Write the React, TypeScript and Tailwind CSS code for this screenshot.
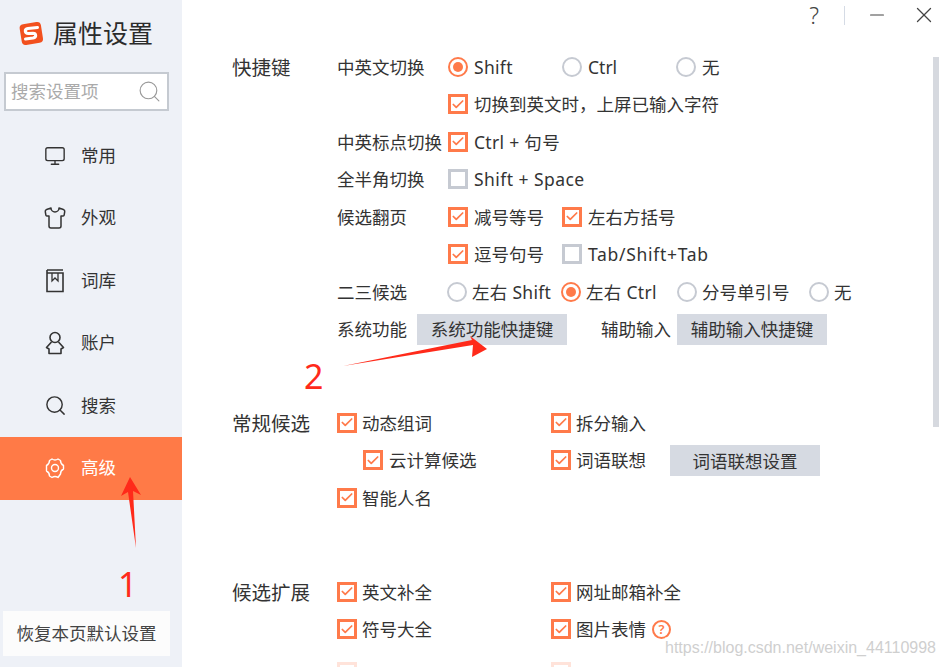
import { Monitor, Shirt, Search, Check, X, Minus } from 'lucide-react'

const FONT = '[font-family:"Noto_Sans","Noto_Sans_CJK_SC",sans-serif]'

function Box({ on = true }: { on?: boolean }) {
  return (
    <span
      className={`flex h-5 w-5 shrink-0 items-center justify-center border-[3px] bg-white ${
        on ? 'border-[#ff7a4a]' : 'border-[#c6cad2]'
      }`}
    >
      {on && <Check size={15} strokeWidth={3} className="text-[#ff7a4a]" />}
    </span>
  )
}

function Radio({ on = false }: { on?: boolean }) {
  return (
    <span
      className={`flex h-5 w-5 shrink-0 items-center justify-center rounded-full border-[2.5px] bg-white ${
        on ? 'border-[#ff7a4a]' : 'border-[#c6cad2]'
      }`}
    >
      {on && <span className="h-2.5 w-2.5 rounded-full bg-[#ff7a4a]" />}
    </span>
  )
}

function Opt({
  kind = 'box',
  on = true,
  text,
  width,
  gap = 'gap-[6px]',
  latin,
}: {
  kind?: 'box' | 'radio'
  on?: boolean
  text: string
  width?: string
  gap?: string
  latin?: string
}) {
  return (
    <div className={`flex items-center ${gap} ${width ?? ''}`}>
      {kind === 'box' ? <Box on={on} /> : <Radio on={on} />}
      <span className={`whitespace-nowrap ${latin ?? ''}`}>{text}</span>
    </div>
  )
}

function Row({ label, children }: { label?: string; children: React.ReactNode }) {
  return (
    <div className="flex h-[37.5px] items-center">
      <span className="w-[111px] shrink-0 whitespace-nowrap">{label}</span>
      {children}
    </div>
  )
}

function Btn({ text, width }: { text: string; width: string }) {
  return (
    <button className={`h-[31px] ${width} bg-[#d6dae2] text-[17.5px] text-[#333]`}>{text}</button>
  )
}

function BookIcon() {
  return (
    <svg width="18" height="24" viewBox="0 0 18 24" fill="none" stroke="#333" strokeWidth="1.6">
      <path d="M1 1h16M1 1v21.500h16V4H1" />
      <path d="M6 4v8l3-3 3 3V4" strokeWidth="1.300" />
    </svg>
  )
}

function UserIcon() {
  return (
    <svg width="20" height="24" viewBox="0 0 20 24" fill="none" stroke="#333" strokeWidth="1.6" strokeLinejoin="round">
      <circle cx="10" cy="6.500" r="5" />
      <path d="M6.500 11 1.500 16.500l2.500 1.500v4.500h12V18l2.500-1.500-5-5.500" />
    </svg>
  )
}

function GearIcon() {
  return (
    <svg width="22" height="24" viewBox="0 0 22 24" fill="none" stroke="#fff" strokeWidth="1.400" strokeLinejoin="round">
      <path d="M8 2.500q3 2 6 0l2.500 1.500q0 3.500 3 5v3.500q-3 1.500-3 5L14 21q-3-2-6 0l-2.500-1.500q0-3.500-3-5V9q3-1.500 3-5z" transform="translate(0 .500)" />
      <circle cx="11" cy="12" r="3.500" />
    </svg>
  )
}

function NavItem({
  icon,
  text,
  active,
}: {
  icon: React.ReactNode
  text: string
  active?: boolean
}) {
  return (
    <div
      className={`flex h-[62.5px] items-center ${
        active ? 'bg-[#ff7a47] text-white' : 'text-[#333]'
      }`}
    >
      <span className="flex w-[81px] justify-center pl-[29px]">{icon}</span>
      <span className="pb-[2px] text-[17.5px]">{text}</span>
    </div>
  )
}

function Logo() {
  return (
    <svg width="27" height="27" viewBox="0 0 27 27">
      <rect x="2.500" y="3" width="21.500" height="21" rx="4" fill="#f2501e" transform="rotate(-9 13 13)" />
      <path
        d="M19.500 7.500 10 8.500q-3 .5-2.700 2.700t3 2.300l4.700-.2q2.500 0 2.700 2t-2.700 2.700L7.500 19"
        fill="none"
        stroke="#fff"
        strokeWidth="3"
        strokeLinecap="round"
      />
    </svg>
  )
}

export default function App() {
  return (
    <div className={`relative flex h-[667px] w-[947px] overflow-hidden bg-white text-[17.5px] text-[#333] ${FONT}`}>
      {/* sidebar */}
      <aside className="flex w-[182px] shrink-0 flex-col bg-[#eef1f7]">
        <div className="flex h-[66px] items-center gap-[8px] pl-[18px]">
          <Logo />
          <span className="text-[25px] leading-none text-[#2b2b2b]">属性设置</span>
        </div>
        <div className="mt-[6px] ml-[4px] flex h-[39px] w-[165px] items-center justify-between border-[2px] border-[#c5cad1] bg-white pr-[5px] pl-[5px]">
          <span className="text-[17.5px] text-[#aaa]">搜索设置项</span>
          <Search size={25} strokeWidth={1.1} className="text-[#999]" />
        </div>
        <div className="mt-[13.5px] flex flex-col">
          <NavItem icon={<Monitor size={22} strokeWidth={1.5} />} text="常用" />
          <NavItem icon={<Shirt size={24} strokeWidth={1.5} />} text="外观" />
          <NavItem icon={<BookIcon />} text="词库" />
          <NavItem icon={<UserIcon />} text="账户" />
          <NavItem icon={<Search size={23} strokeWidth={1.5} />} text="搜索" />
          <NavItem icon={<GearIcon />} text="高级" active />
        </div>
        <button className="mt-auto mb-[11px] ml-[3px] h-[45px] w-[167px] bg-[#fcfcfc] text-[17.5px] whitespace-nowrap text-[#444]">
          恢复本页默认设置
        </button>
      </aside>

      {/* settings */}
      <main className="relative flex min-w-0 flex-1 flex-col">
        <div className="flex h-[48px] shrink-0 justify-end pr-[10px]">
          <div className="flex h-[30px] items-center text-[#444]">
            <span className="text-[23px] leading-none font-light">?</span>
            <span className="mr-[21px] ml-[25px] h-[19px] w-px bg-[#d5dbe5]" />
            <Minus size={22} strokeWidth={1.3} className="mr-[23px]" />
            <X size={26} strokeWidth={1.2} />
          </div>
        </div>

        <div className="flex flex-col pl-[50px]">
          <section className="flex h-[319px]">
            <h2 className="w-[105px] shrink-0 pt-[5.500px] text-[19.500px] leading-[28px] font-normal">快捷键</h2>
            <div className="flex flex-col">
              <Row label="中英文切换">
                <Opt kind="radio" on text="Shift" width="w-[114px]" latin="tracking-[0.3px]" />
                <Opt kind="radio" on={false} text="Ctrl" width="w-[114px]" />
                <Opt kind="radio" on={false} text="无" />
              </Row>
              <Row>
                <Opt text="切换到英文时，上屏已输入字符" />
              </Row>
              <Row label="中英标点切换">
                <Opt text="Ctrl + 句号" latin="tracking-[0.3px]" />
              </Row>
              <Row label="全半角切换">
                <Opt on={false} text="Shift + Space" latin="tracking-[0.45px]" />
              </Row>
              <Row label="候选翻页">
                <Opt text="减号等号" width="w-[114px]" />
                <Opt text="左右方括号" />
              </Row>
              <Row>
                <Opt text="逗号句号" width="w-[114px]" />
                <Opt on={false} text="Tab/Shift+Tab" latin="tracking-[0.7px]" />
              </Row>
              <Row label="二三候选">
                <span className="-ml-[1px]" />
                <Opt kind="radio" on={false} text="左右 Shift" width="w-[114px]" gap="gap-[5px]" latin="tracking-[0.3px]" />
                <Opt kind="radio" on text="左右 Ctrl" width="w-[116px]" gap="gap-[5px]" latin="tracking-[0.3px]" />
                <Opt kind="radio" on={false} text="分号单引号" width="w-[132px]" gap="gap-[5px]" />
                <Opt kind="radio" on={false} text="无" gap="gap-[5px]" />
              </Row>
              <div className="flex h-[37.5px] items-center">
                <span className="w-[80px] shrink-0 whitespace-nowrap">系统功能</span>
                <Btn text="系统功能快捷键" width="w-[150px]" />
                <span className="ml-[34px] w-[76px] shrink-0 whitespace-nowrap">辅助输入</span>
                <Btn text="辅助输入快捷键" width="w-[150px]" />
              </div>
            </div>
          </section>

          <section className="mt-[37px] flex h-[150px]">
            <h2 className="w-[105px] shrink-0 pt-[5.500px] text-[19.500px] leading-[28px] font-normal whitespace-nowrap">常规候选</h2>
            <div className="flex flex-col">
              <div className="flex h-[37.5px] items-center">
                <Opt text="动态组词" width="w-[214px]" gap="gap-[5px]" />
                <Opt text="拆分输入" gap="gap-[5px]" />
              </div>
              <div className="flex h-[37.5px] items-center">
                <Opt text="云计算候选" width="w-[214px] pl-[26px]" />
                <Opt text="词语联想" gap="gap-[5px]" />
                <span className="mt-[1px] ml-[24px]">
                  <Btn text="词语联想设置" width="w-[150px]" />
                </span>
              </div>
              <div className="flex h-[37.5px] items-center">
                <Opt text="智能人名" gap="gap-[5px]" />
              </div>
            </div>
          </section>

          <section className="mt-[19px] flex">
            <h2 className="w-[105px] shrink-0 pt-[5.500px] text-[19.500px] leading-[28px] font-normal whitespace-nowrap">候选扩展</h2>
            <div className="flex flex-col">
              <div className="flex h-[37.5px] items-center">
                <Opt text="英文补全" width="w-[214px]" gap="gap-[5px]" />
                <Opt text="网址邮箱补全" gap="gap-[5px]" />
              </div>
              <div className="flex h-[37.5px] items-center">
                <Opt text="符号大全" width="w-[214px]" gap="gap-[5px]" />
                <Opt text="图片表情" gap="gap-[5px]" />
                <span className="ml-[6px] flex h-[19px] w-[19px] items-center justify-center rounded-full border-[2.5px] border-[#ff7a4a] text-[13px] leading-none font-semibold text-[#ff7a4a]">
                  ?
                </span>
              </div>
              {/* next row, mostly hidden behind the watermark fade */}
              <div className="flex h-[37.5px] items-start pt-[14px] opacity-20">
                <span className="w-[214px]">
                  <Box />
                </span>
                <Box />
              </div>
            </div>
          </section>
        </div>

        {/* scrollbar thumb */}
        <div className="absolute top-[57px] right-[8px] h-[370px] w-[6px] bg-[#d6d9df]" />
      </main>

      {/* annotations drawn on top of the screenshot */}
      <svg className="pointer-events-none absolute inset-0" width="947" height="667" viewBox="0 0 947 667">
        <path d="M130 477 L141 495 L133 491 L136 548 L128 492 L121 496 Z" fill="#ff2a1a" />
        <path d="M343 366 L472 340 L470 336 L487 349 L472 357 L473 345 Z" fill="#ff2a1a" />
      </svg>
      <span className="absolute top-[563px] left-[118px] text-[34px] leading-[42px] text-[#ff2a1a]">1</span>
      <span className="absolute top-[355px] left-[304px] text-[34px] leading-[42px] text-[#ff2a1a]">2</span>
      <span className='absolute top-[637px] left-[665px] bg-white/50 text-[16px] leading-[22px] whitespace-nowrap text-[#cfcfcf] [font-family:"Liberation_Sans",sans-serif]'>
        https://blog.csdn.net/weixin_44110998
      </span>
    </div>
  )
}
